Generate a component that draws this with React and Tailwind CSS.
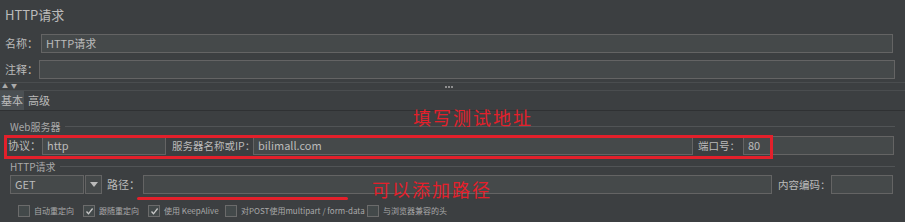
import { useState } from "react";

const font = { fontFamily: '"Noto Sans CJK SC", "Noto Sans", sans-serif' };

function Input({ value = "", className = "" }) {
  return (
    <div className={"h-[19px] shrink-0 bg-[#45494a] border border-[#646464] px-[4px] flex items-center text-[11px] text-[#bbbbbb] " + className}>
      {value}
    </div>
  );
}

function Label({ children, className = "" }) {
  return <span className={"shrink-0 whitespace-nowrap " + className}>{children}</span>;
}

function Check({ checked, label, className = "" }) {
  return (
    <div className={"flex items-center gap-[4px] shrink-0 " + className}>
      <div className="w-[12px] h-[12px] border border-[#6b6b6b] bg-[#43494a] flex items-center justify-center">
        {checked && (
          <svg width="9" height="9" viewBox="0 0 9 9">
            <path d="M1.5 4.5 L3.5 6.8 L7.6 1.5" fill="none" stroke="#c8c8c8" strokeWidth="1.3" />
          </svg>
        )}
      </div>
      <span className="text-[8px] text-[#a9a9a9] whitespace-nowrap">{label}</span>
    </div>
  );
}

export default function App() {
  const [tab] = useState("basic");
  return (
    <div className="w-[905px] h-[222px] bg-[#3c3f41] overflow-hidden relative text-[#bbbbbb]" style={font}>
      <div className="h-[30px] pl-[5px] pt-[7px] text-[13px] leading-[16px]">HTTP请求</div>

      <div className="flex items-center h-[20px] mt-[3px]">
        <Label className="w-[41px] pl-[5px] text-[11px]">名称：</Label>
        <Input value="HTTP请求" className="w-[852px]" />
      </div>
      <div className="flex items-center h-[20px] mt-[6px]">
        <Label className="w-[39px] pl-[5px] text-[11px]">注释：</Label>
        <Input className="w-[856px]" />
      </div>

      <div className="h-[9px] mt-[3px] border-t border-b border-[#4a4d4f] flex items-center relative">
        <div className="absolute left-[2px] top-[0px] flex gap-[3px] text-[6px] leading-[6px] text-[#aaaaaa]">
          <span>▲</span>
          <span>▼</span>
        </div>
        <div className="flex gap-[1px] ml-[445px]">
          <div className="w-[2px] h-[2px] bg-[#aaaaaa] rounded-full" />
          <div className="w-[2px] h-[2px] bg-[#aaaaaa] rounded-full" />
          <div className="w-[2px] h-[2px] bg-[#aaaaaa] rounded-full" />
        </div>
      </div>

      <div className="flex h-[20px] border-b border-[#2f3133] text-[11px]">
        <div className={"px-[1px] flex items-center " + (tab === "basic" ? "bg-[#4b5053]" : "")}>基本</div>
        <div className="px-[4px] flex items-center">高级</div>
      </div>

      <div className="flex items-center h-[16px] mt-[7px] pl-[10px] text-[10px]">
        <Label className="text-[#a9a9a9]">Web服务器</Label>
        <div className="flex-1 h-px bg-[#515456] ml-[4px] mr-[10px]" />
      </div>
      <div className="flex items-center h-[19px] mt-[2px] pl-[8px] text-[11px]">
        <Label className="w-[34px]">协议：</Label>
        <Input value="http" className="w-[124px]" />
        <Label className="ml-[6px] w-[81px] text-[10.5px]">服务器名称或IP：</Label>
        <Input value="bilimall.com" className="w-[440px]" />
        <Label className="ml-[5px] w-[45px] text-[10.5px]">端口号：</Label>
        <Input value="80" className="w-[151px]" />
      </div>

      <div className="flex items-center h-[14px] mt-[4px] pl-[10px] text-[10px]">
        <Label className="text-[#a9a9a9]">HTTP请求</Label>
        <div className="flex-1 h-px bg-[#515456] ml-[4px] mr-[10px]" />
      </div>
      <div className="flex items-center h-[19px] mt-[2px] pl-[10px] text-[11px]">
        <div className="w-[74px] h-[19px] shrink-0 bg-[#45494a] border border-[#646464] px-[4px] flex items-center">GET</div>
        <div className="w-[17px] h-[19px] shrink-0 ml-px bg-[#45494a] border border-[#646464] flex items-center justify-center">
          <svg width="8" height="5" viewBox="0 0 8 5"><path d="M0 0 L8 0 L4 5 Z" fill="#bbbbbb" /></svg>
        </div>
        <Label className="ml-[5px] w-[36px]">路径：</Label>
        <Input className="w-[629px]" />
        <Label className="ml-[6px] w-[53px] text-[10.5px]">内容编码：</Label>
        <Input className="w-[62px]" />
      </div>

      <div className="flex items-center h-[14px] mt-[10px] pl-[18px]">
        <Check label="自动重定向" className="w-[65px]" />
        <Check checked label="跟随重定向" className="w-[65px]" />
        <Check checked label="使用 KeepAlive" className="w-[77px]" />
        <Check label="对POST使用multipart / form-data" className="w-[142px]" />
        <Check label="与浏览器兼容的头" />
      </div>

      {/* annotations */}
      <div className="absolute left-[4px] top-[135px] w-[769px] h-[24px] border-[3px] border-[#e3202b]" />
      <div className="absolute left-[413px] top-[106px] text-[18px] leading-[22px] text-[#e3202b] tracking-[2px]">填写测试地址</div>
      <div className="absolute left-[137px] top-[197px] w-[211px] h-[3px] bg-[#e3202b] rounded-full" />
      <div className="absolute left-[372px] top-[178px] text-[18px] leading-[22px] text-[#e3202b] tracking-[2px]">可以添加路径</div>
    </div>
  );
}
